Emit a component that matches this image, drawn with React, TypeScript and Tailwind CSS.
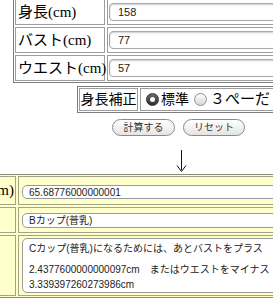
const serif = { fontFamily: '"Liberation Serif", "Noto Sans CJK JP", serif' };

const topRows = [
  { label: '身長(cm)', value: '158' },
  { label: 'バスト(cm)', value: '77' },
  { label: 'ウエスト(cm)', value: '57' },
];

const Radio = ({ checked }: { checked: boolean }) =>
  checked ? (
    <span className="flex h-[13px] w-[13px] items-center justify-center rounded-full border border-[#333] bg-gradient-to-b from-[#6a6a6a] to-[#2e2e2e]">
      <span className="h-[5px] w-[5px] rounded-full bg-white" />
    </span>
  ) : (
    <span className="h-[13px] w-[13px] rounded-full border border-[#8f8f8f] bg-gradient-to-b from-white to-[#d6d6d6]" />
  );

export default function App() {
  return (
    <div className="relative h-[300px] w-[273px] overflow-hidden bg-white font-['Liberation_Sans','Noto_Sans_CJK_JP',sans-serif] text-black">
      {/* input table */}
      <div className="ml-[13px] mt-[-3px] flex w-[320px] flex-col gap-[2px] border border-[#7d7d7d] p-[1px]">
        {topRows.map((row) => (
          <div key={row.label} className="flex h-[26px] gap-[2px]">
            <div
              className="flex w-[90px] items-center whitespace-nowrap border border-[#9d9d9d] pl-[2px] text-[15px] leading-none"
              style={serif}
            >
              {row.label}
            </div>
            <div className="flex-1 border border-[#9d9d9d] px-[1px] pt-[3px]">
              <div className="flex h-[18px] items-center rounded-[4px] border border-[#a8a8a8] pl-[8px] text-[11px] text-[#222] shadow-[inset_0_1px_2px_rgba(0,0,0,0.2)]">
                {row.value}
              </div>
            </div>
          </div>
        ))}
      </div>

      {/* height correction */}
      <div className="ml-[77px] mt-[3px] flex h-[27px] w-[260px] gap-[2px] border border-[#7d7d7d] p-[1px]">
        <div className="flex w-[59px] items-center justify-center border border-[#9d9d9d] text-[14px] leading-none" style={serif}>
          身長補正
        </div>
        <div className="flex flex-1 items-center gap-[1px] whitespace-nowrap border border-[#9d9d9d] pl-[5px] text-[14px] leading-none" style={serif}>
          <Radio checked />
          <span className="ml-[1px]">標準</span>
          <span className="ml-[3px]" />
          <Radio checked={false} />
          <span className="ml-[2px] text-[15px]">３ぺーだ</span>
        </div>
      </div>

      {/* buttons */}
      <div className="ml-[112px] mt-[6px] flex gap-[8px]">
        <button className="flex h-[17px] w-[63px] items-center justify-center rounded-full border border-[#8a8a8a] bg-gradient-to-b from-white to-[#e4e4e4] text-[10px] text-[#333]">
          計算する
        </button>
        <button className="flex h-[17px] w-[62px] items-center justify-center rounded-full border border-[#8a8a8a] bg-gradient-to-b from-white to-[#e4e4e4] text-[10px] text-[#333]">
          リセット
        </button>
      </div>

      {/* arrow */}
      <svg className="ml-[176px] mt-[14px] block" width="11" height="22" viewBox="0 0 11 22">
        <path d="M5.5 0V20" stroke="#111" strokeWidth="1" fill="none" />
        <path d="M1 15.5L5.5 21.5L10 15.5" stroke="#111" strokeWidth="1" fill="none" />
      </svg>

      {/* result table */}
      <div className="ml-[-90px] mt-[2px] flex w-[400px] flex-col gap-[2px] border border-[#8a8a7a] bg-[#ffffcc] p-[1px]">
        <div className="flex h-[29px] gap-[2px]">
          <div className="flex w-[104px] items-center justify-end whitespace-nowrap border border-[#a3a38a] pr-[1px] text-[15px] leading-none" style={serif}>
            (cm)
          </div>
          <div className="flex-1 border border-[#a3a38a] pl-[3px] pt-[8px]">
            <div className="flex h-[14px] items-center rounded-[5px] border border-[#9a9a9a] bg-white pl-[6px] text-[10px] text-[#222]">
              65.68776000000001
            </div>
          </div>
        </div>
        <div className="flex h-[26px] gap-[2px]">
          <div className="w-[104px] border border-[#a3a38a]" />
          <div className="flex-1 border border-[#a3a38a] pl-[3px] pt-[5px]">
            <div className="flex h-[15px] items-center rounded-[5px] border border-[#9a9a9a] bg-white pl-[6px] text-[10px] text-[#222]">
              Bカップ(普乳)
            </div>
          </div>
        </div>
        <div className="flex h-[61px] gap-[2px]">
          <div className="w-[104px] border border-[#a3a38a]" />
          <div className="flex-1 border border-[#a3a38a] pl-[3px] pt-[2px]">
            <div className="h-[55px] rounded-[5px] border border-[#9a9a9a] bg-white pl-[6px] pt-[2px] text-[10px] leading-[16px] text-[#222]">
              <div>Cカップ(普乳)になるためには、あとバストをプラス</div>
              <div className="mt-[5px]">2.4377600000000097cm　またはウエストをマイナス</div>
              <div className="mt-[-1px]">3.339397260273986cm</div>
            </div>
          </div>
        </div>
      </div>
    </div>
  );
}
